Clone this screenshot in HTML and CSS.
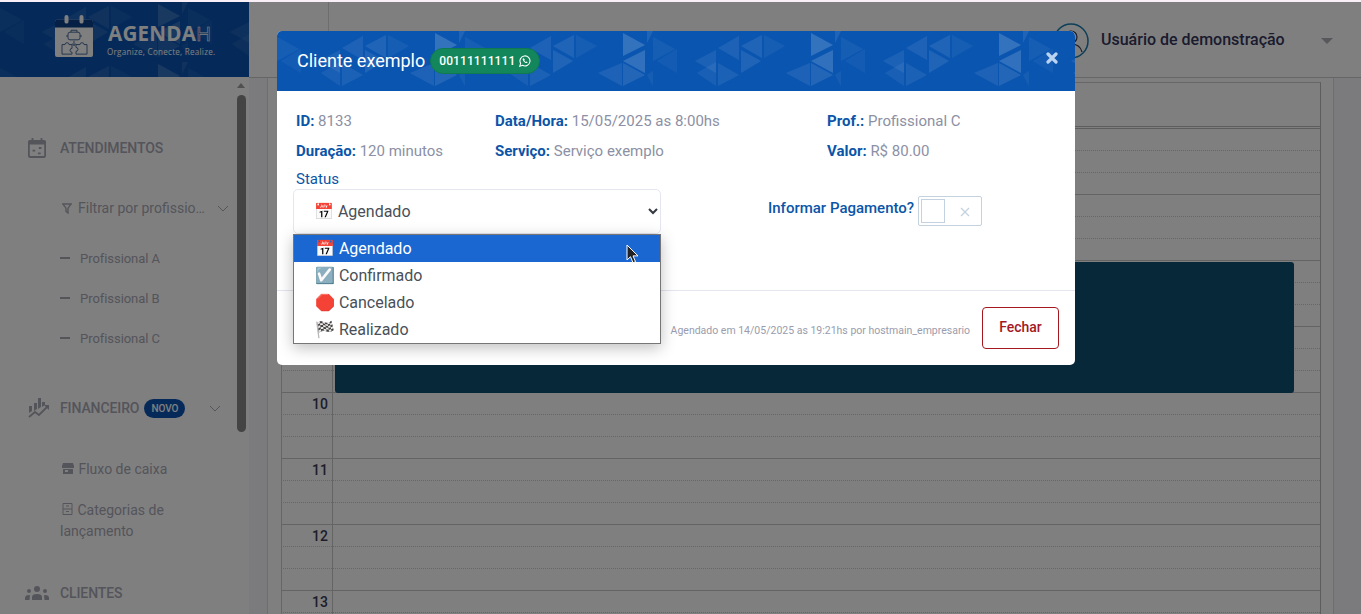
FILE: index.html
```html
<!DOCTYPE html>
<html lang="pt-BR">
<head>
  <meta charset="UTF-8">
  <meta name="viewport" content="width=device-width, initial-scale=1.0">
  <title>Agendah</title>
  <link rel="stylesheet" href="styles.css">
</head>
<body>
  <div id="page">
    <div id="sidebar">
      <div id="brand">
        <svg class="tri-bg" width="249" height="75"><defs>
          <pattern id="tri" width="188" height="60" patternUnits="userSpaceOnUse">
            <polygon points="158,2 180,14 158,25" fill="#fff" opacity=".17"/>
            <polygon points="158,30 180,19 180,42" fill="#fff" opacity=".16"/>
            <polygon points="182,12 182,0 188,0" fill="#fff" opacity=".09"/>
            <polygon points="109,4 109,27 88,15" fill="#fff" opacity=".09"/>
            <polygon points="111,4 111,27 132,15" fill="#fff" opacity=".05"/>
            <polygon points="88,19 88,42 108,30" fill="#fff" opacity=".09"/>
            <polygon points="63,19 63,42 42,30" fill="#fff" opacity=".07"/>
            <polygon points="133,42 157,32 157,55" fill="#fff" opacity=".08"/>
            <polygon points="158,32 180,44 158,55" fill="#fff" opacity=".1"/>
            <polygon points="182,44 188,40 188,55" fill="#fff" opacity=".05"/>
            <polygon points="65,17 86,5 86,29" fill="#fff" opacity=".08"/>
            <polygon points="44,42 63,31 63,55" fill="#fff" opacity=".06"/>
            <polygon points="65,32 86,44 65,55" fill="#fff" opacity=".07"/>
            <polygon points="0,6 22,18 0,30" fill="#fff" opacity=".05"/>
            <polygon points="24,18 24,42 4,30" fill="#fff" opacity=".04"/>
          </pattern></defs>
          <rect width="249" height="75" fill="url(#tri)"/>
        </svg>
        <svg class="logo" width="38" height="42" viewBox="0 0 38 44" preserveAspectRatio="none">
          <rect x="0" y="5" width="38" height="39" rx="2" fill="#fff"/>
          <path d="M0 13V7a2 2 0 0 1 2-2h34a2 2 0 0 1 2 2v6z" fill="#0d3f88"/>
          <rect x="9.500" y="0" width="4" height="9" rx="2" fill="#fff"/>
          <rect x="24.500" y="0" width="4" height="9" rx="2" fill="#fff"/>
          <g fill="none" stroke="#4a6a9a" stroke-width="1">
            <rect x="13" y="18" width="12" height="8" rx="2"/>
            <path d="M16 18v-2h6v2M13 22h-2M25 22h2M19 27v5M17 30l2 2 2-2"/>
            <path d="M7 31h3a2 2 0 0 1 4 0h3v4a2 2 0 0 0 0 4v2H7z"/>
            <path d="M21 31h4a2 2 0 0 1 4 0h3v10H21v-3a2 2 0 0 0 0-4z"/>
          </g>
        </svg>
        <div class="brand-text">
          <div class="brand-name">AGENDA<span class="brand-h">H</span></div>
          <div class="brand-tag">Organize, Conecte, Realize.</div>
        </div>
      </div>
      <div id="nav">
        <div class="nav-head nav-first">
          <svg class="nav-icon" width="18" height="20" viewBox="0 0 20 22"><path fill="currentColor" d="M4 0h2v2h8V0h2v2h2a2 2 0 0 1 2 2v16a2 2 0 0 1-2 2H2a2 2 0 0 1-2-2V4a2 2 0 0 1 2-2h2zM2 7v13h16V7zM5 13h3v2H5zm7-3h3v2h-3zm-1 6h3v2h-3z"/></svg>
          <span>ATENDIMENTOS</span>
        </div>
        <div class="nav-filter">
          <svg width="10" height="11" viewBox="0 0 10 11"><path fill="none" stroke="currentColor" stroke-width="1.400" d="M.8 1h8.400L6 5.200V10L4 8.500V5.200z"/></svg>
          <span class="filter-text">Filtrar por profissio…</span>
          <svg class="chev" width="12" height="7" viewBox="0 0 12 7"><path fill="none" stroke="currentColor" d="M1 1l5 5 5-5"/></svg>
        </div>
        <div class="nav-sub sub-first"><i></i>Profissional A</div>
        <div class="nav-sub"><i></i>Profissional B</div>
        <div class="nav-sub"><i></i>Profissional C</div>
        <div class="nav-head nav-fin">
          <svg class="nav-icon" width="22" height="20" viewBox="0 0 22 20"><path fill="currentColor" d="M1 8h3v5l-3 2zM6 5h3v6l-3 2zM10 0h3v9l-3 2zM14 4h3v3l-3 2z"/><path fill="none" stroke="currentColor" stroke-width="1.800" d="M1 19l6-5 4 3 8-8"/><path fill="currentColor" d="M16 7h5v5z"/></svg>
          <span>FINANCEIRO</span>
          <span class="badge-new">NOVO</span>
          <svg class="chev chev-fin" width="12" height="7" viewBox="0 0 12 7"><path fill="none" stroke="currentColor" d="M1 1l5 5 5-5"/></svg>
        </div>
        <div class="nav-link link-first">
          <svg width="12" height="11" viewBox="0 0 12 11"><path fill="currentColor" d="M1 0h10l1 3v2H0V3zM1 6h10v5H1zm2 1v2h3V7z"/></svg>
          Fluxo de caixa
        </div>
        <div class="nav-link link-wrap">
          <svg width="11" height="12" viewBox="0 0 11 12"><path fill="none" stroke="currentColor" d="M1 .5h9v11H1zM1 6h9"/><path fill="currentColor" d="M4 2.500h3v1H4zm0 5.500h3v1H4z"/></svg>
          Categorias de lançamento
        </div>
        <div class="nav-head nav-cli">
          <svg class="nav-icon nav-icon-wide" width="24" height="14" viewBox="0 0 24 14"><path fill="currentColor" d="M12 0a3 3 0 1 1 0 6 3 3 0 0 1 0-6zM4 3a2 2 0 1 1 0 4 2 2 0 0 1 0-4zm16 0a2 2 0 1 1 0 4 2 2 0 0 1 0-4zM7 14v-3q0-3 5-3t5 3v3zM0 14v-2q0-3 4-3l1 .3L4.500 14zm24 0v-2q0-3-4-3l-1 .3.5 4.700z"/></svg>
          <span>CLIENTES</span>
        </div>
      </div>
      <div class="scrollbar">
        <div class="scroll-up"></div>
        <div class="scroll-thumb"></div>
      </div>
    </div>
    <div id="main">
      <div id="topbar">
        <div class="top-divider"></div>
        <div class="user">
          <svg class="user-icon" width="36" height="36" viewBox="0 0 36 36"><circle cx="18" cy="18" r="17" fill="none" stroke="#1a7fb0" stroke-width="1.500"/><circle cx="18" cy="14" r="6" fill="none" stroke="#3a3a4c" stroke-width="1.200"/><path d="M7 29q2-8 11-8t11 8" fill="none" stroke="#3a3a4c" stroke-width="1.200"/></svg>
          <span class="user-name">Usuário de demonstração</span>
          <span class="user-caret"></span>
        </div>
      </div>
      <div id="content">
        <div class="content-inner">
          <div class="calendar">
            <div class="cal-head"></div>
            <div class="hour"><div class="hour-no"></div><div class="slots"><div></div><div></div><div></div></div></div>
            <div class="hour"><div class="hour-no"></div><div class="slots"><div></div><div></div><div></div></div></div>
            <div class="hour"><div class="hour-no"></div><div class="slots"><div></div><div></div><div></div></div></div>
            <div class="hour"><div class="hour-no"></div><div class="slots"><div></div><div></div><div></div></div></div>
            <div class="hour"><div class="hour-no">10</div><div class="slots"><div></div><div></div><div></div></div></div>
            <div class="hour"><div class="hour-no">11</div><div class="slots"><div></div><div></div><div></div></div></div>
            <div class="hour"><div class="hour-no">12</div><div class="slots"><div></div><div></div><div></div></div></div>
            <div class="hour"><div class="hour-no">13</div><div class="slots"><div></div><div></div><div></div></div></div>
            <div class="event"></div>
          </div>
        </div>
      </div>
    </div>
    <div id="overlay">
      <div id="modal">
        <div class="modal-head">
          <svg class="tri-bg" width="798" height="60"><rect width="798" height="60" fill="url(#tri)"/></svg>
          <span class="modal-title">Cliente exemplo</span>
          <span class="phone">00111111111
            <svg width="12" height="12" viewBox="0 0 12 12"><path fill="none" stroke="#fff" stroke-width="1.100" d="M.8 11.200l.8-2.900A5 5 0 1 1 3.600 10.300z"/><path fill="#fff" d="M4.200 3.200c-.6.500-.7 1.300-.2 2.300.6 1.200 1.500 2 2.700 2.500.9.300 1.600 0 2-.7l-1.300-.9-.6.500c-.7-.3-1.200-.8-1.500-1.500l.5-.6-.8-1.400z"/></svg>
          </span>
          <svg class="modal-close" width="12" height="12" viewBox="0 0 12 12"><path stroke="#b9d3f0" stroke-width="3.200" stroke-linecap="round" d="M2 2l8 8M10 2l-8 8"/></svg>
        </div>
        <div class="modal-body">
          <div class="info-grid">
            <div><b>ID:</b> 8133</div>
            <div><b>Data/Hora:</b> 15/05/2025 as 8:00hs</div>
            <div><b>Prof.:</b> Profissional C</div>
            <div><b>Duração:</b> 120 minutos</div>
            <div><b>Serviço:</b> Serviço exemplo</div>
            <div><b>Valor:</b> R$ 80.00</div>
          </div>
          <div class="status-label">Status</div>
          <div class="status-row">
            <div class="select-box">
              <span class="select-value"><span class="emoji">📅</span> Agendado</span>
              <svg width="10" height="7" viewBox="0 0 10 7"><path fill="none" stroke="#343a40" stroke-width="2" d="M1 1l4 4 4-4"/></svg>
            </div>
            <div class="pay">
              <span class="pay-label">Informar Pagamento?</span>
              <div class="toggle">
                <div class="toggle-knob"></div>
                <svg width="10" height="10" viewBox="0 0 10 10"><path stroke="#c3d2de" stroke-width="1.300" d="M1 1l8 8M9 1l-8 8"/></svg>
              </div>
            </div>
          </div>
        </div>
        <div class="modal-foot">
          <span class="foot-note">Agendado em 14/05/2025 as 19:21hs por hostmain_empresario</span>
          <button class="btn-close">Fechar</button>
        </div>
        <div class="select-list">
          <div class="option option-on"><span class="emoji">📅</span> Agendado</div>
          <div class="option"><span class="emoji">☑️</span> Confirmado</div>
          <div class="option"><span class="emoji">🛑</span> Cancelado</div>
          <div class="option"><span class="emoji">🏁</span> Realizado</div>
        </div>
        <svg class="cursor" width="14" height="20" viewBox="0 0 14 20"><path fill="#222" stroke="#fff" d="M1 1v15l3.500-3.300 2.500 6 2.500-1-2.500-5.800H12z"/></svg>
      </div>
    </div>
  </div>
</body>
</html>
```

FILE: styles.css
```css
*{
  margin: 0px;
  padding: 0px;
  box-sizing: border-box;
}
body{
  width: 1361px;
  height: 614px;
  overflow: hidden;
  background-color: #f8f0f6;
  font-family: Roboto, "Liberation Sans", sans-serif;
  padding-top: 2px;
}
#page{
  position: relative;
  height: 612px;
  display: flex;
  overflow: hidden;
  background-color: #fff;
}

/* sidebar */
#sidebar{
  position: relative;
  width: 249px;
  flex-shrink: 0;
  background-color: #fff;
  color: #a9a9b6;
}
#brand{
  position: relative;
  height: 75px;
  background-color: #0a55b4;
  display: flex;
  padding: 13px 0 0 55px;
  gap: 15px;
}
.tri-bg{
  position: absolute;
  left: 0;
  top: 0;
}
.logo{
  position: relative;
}
.brand-text{
  position: relative;
  color: #fff;
  font-family: "Open Sans", sans-serif;
  margin-top: 6px;
}
.brand-name{
  font-size: 20.600px;
  font-weight: 700;
  line-height: 25px;
  letter-spacing: .2px;
}
.brand-h{
  color: transparent;
  -webkit-text-stroke: .6px #fff;
  font-weight: 400;
}
.brand-tag{
  font-size: 8.100px;
  line-height: 11px;
  letter-spacing: .25px;
  margin-left: -1px;
}
#nav{
  width: 237px;
  padding-left: 60px;
  font-size: 14px;
}
.nav-head{
  position: relative;
  height: 20px;
  line-height: 20px;
  font-weight: 500;
  letter-spacing: -.1px;
}
.nav-icon{
  position: absolute;
  left: -32px;
  top: 0;
}
.nav-icon-wide{
  left: -35px;
  top: 3px;
}
.nav-first{
  margin-top: 61px;
}
.nav-filter{
  display: flex;
  align-items: center;
  height: 20px;
  margin-top: 40px;
  font-size: 14px;
  margin-left: 2px;
}
.filter-text{
  margin-left: 6px;
}
.chev{
  margin-left: 12px;
}
.nav-sub{
  display: flex;
  align-items: center;
  height: 20px;
  margin-top: 20px;
  font-size: 13px;
  letter-spacing: -.05px;
}
.nav-sub i{
  width: 10px;
  height: 2px;
  margin-right: 10px;
  background-color: currentColor;
}
.sub-first{
  margin-top: 30px;
}
.nav-fin{
  display: flex;
  align-items: center;
  margin-top: 60px;
  margin-top: 50px;
}
.nav-fin .nav-icon{
  top: 0;
  left: -32px;
}
.badge-new{
  margin-left: 5px;
  width: 41px;
  height: 19px;
  border-radius: 10px;
  background-color: #0a55b4;
  color: #fff;
  font-size: 10px;
  line-height: 19px;
  text-align: center;
}
.chev-fin{
  margin-left: 24px;
}
.nav-link{
  font-size: 14px;
  line-height: 21px;
}
.link-first{
  margin-top: 41px;
}
.link-first svg,.link-wrap svg{
  margin: 0 1px 0 2px;
}
.link-wrap{
  margin-top: 20px;
  width: 130px;
}
.nav-cli{
  margin-top: 41px;
}
.scrollbar{
  position: absolute;
  left: 237px;
  top: 75px;
  width: 10px;
}
.scroll-up{
  width: 0;
  height: 0;
  margin: 6px 0 0 0;
  border: 4.500px solid transparent;
  border-top: 0;
  border-bottom: 5px solid #a0a0a0;
}
.scroll-thumb{
  width: 9px;
  height: 337px;
  margin-top: 7px;
  border-radius: 5px;
  background-color: #888;
}

/* top bar + calendar */
#main{
  flex: 1;
  display: flex;
  flex-direction: column;
  background-color: #fff;
}
#topbar{
  height: 75px;
  display: flex;
  padding-left: 79px;
}
.top-divider{
  width: 1px;
  background-color: #ddd;
}
.user{
  display: flex;
  align-items: center;
  margin-left: 724px;
  padding-top: 2px;
}
.user-icon{
  margin-right: 12px;
}
.user-name{
  font-size: 16px;
  font-weight: 500;
  color: #36365c;
  margin-top: -2px;
}
.user-caret{
  margin-left: 36px;
  border: 6px solid transparent;
  border-top: 6px solid #b0b0b8;
  border-bottom: 0;
}
#content{
  flex: 1;
  background-color: #f6f7fa;
  border-top: 1px solid #ccc;
  padding-left: 18px;
  overflow: hidden;
}
.content-inner{
  width: 1067px;
  height: 100%;
  background-color: #fff;
  padding: 4px 14px 0 13px;
  border-left: 1px solid #ddd;
  border-right: 1px solid #ddd;
}
.calendar{
  position: relative;
  width: 1040px;
  border: 1px solid #ccc;
  border-right: 1px solid #bbb;
}
.cal-head{
  height: 46px;
  border-bottom: 3px double #bbb;
}
.hour{
  display: flex;
  height: 66px;
  border-bottom: 1px solid #c8c8c8;
}
.hour-no{
  width: 51px;
  border-right: 1px solid #c8c8c8;
  padding: 1px 4px 0 0;
  text-align: right;
  font-size: 14px;
  line-height: 20px;
  font-weight: 500;
  color: #3a3a58;
}
.slots{
  flex: 1;
}
.slots div{
  height: 22px;
  margin-left: -52px;
  border-bottom: 1px dotted #ccc;
}
.slots div:last-child{
  border-bottom: 0;
}
.event{
  position: absolute;
  left: 53px;
  top: 179px;
  width: 959px;
  height: 131px;
  border-radius: 3px;
  background-color: #0c5070;
}

/* modal */
#overlay{
  position: absolute;
  left: 0;
  top: 0;
  width: 100%;
  height: 100%;
  background-color: rgba(0,0,0,.5);
  padding: 29px 0 0 277px;
}
#modal{
  position: relative;
  width: 798px;
  height: 334px;
  background-color: #fff;
  border-radius: 5px;
  overflow: hidden;
  display: flex;
  flex-direction: column;
}
.modal-head{
  position: relative;
  height: 60px;
  flex-shrink: 0;
  background-color: #0a55b0;
  display: flex;
  align-items: center;
  padding-left: 20px;
  color: #fff;
}
.modal-title{
  position: relative;
  font-size: 18px;
  line-height: 22px;
}
.phone{
  position: relative;
  display: flex;
  align-items: center;
  gap: 4px;
  margin-left: 5px;
  height: 26px;
  padding: 0 8px 0 8px;
  border-radius: 13px;
  background-color: #13875b;
  border: 1px solid #0f7a52;
  font-size: 12px;
  font-weight: 500;
  letter-spacing: .1px;
}
.modal-close{
  position: absolute;
  right: 17px;
  top: 21px;
}
.modal-body{
  height: 199px;
  flex-shrink: 0;
  padding: 20px 20px 0 16px;
}
.info-grid{
  display: grid;
  grid-template-columns: 199px 332px 1fr;
  grid-auto-rows: 30px;
  padding-left: 3px;
  font-size: 15px;
  line-height: 20px;
  color: #8c90a4;
}
.info-grid b{
  color: #0b55a8;
  font-weight: 700;
}
.status-label{
  padding-left: 3px;
  margin-top: -2px;
  font-size: 15px;
  line-height: 20px;
  color: #0b55a8;
}
.status-row{
  display: flex;
}
.select-box{
  width: 368px;
  height: 45px;
  border: 1px solid #e3e6ef;
  border-radius: 5px;
  display: flex;
  align-items: center;
  justify-content: space-between;
  padding: 0 2px 0 20px;
  font-size: 16px;
  color: #495057;
}
.pay{
  display: flex;
  margin: 7px 0 0 107px;
}
.pay-label{
  margin-right: 4px;
  font-size: 15px;
  line-height: 24px;
  font-weight: 500;
  color: #0b55a8;
  white-space: nowrap;
}
.toggle{
  width: 64px;
  height: 30px;
  border: 1px solid #c3d2de;
  border-radius: 2px;
  padding: 2px 0 0 2px;
  display: flex;
  align-items: flex-start;
  gap: 15px;
}
.toggle svg{
  margin-top: 8px;
}
.toggle-knob{
  width: 24px;
  height: 24px;
  border: 1px solid #c3d2de;
}
.modal-foot{
  flex: 1;
  display: flex;
  align-items: center;
  justify-content: flex-end;
  padding-right: 16px;
  border-top: 1px solid #e3e6ef;
}
.foot-note{
  margin: 4px 12px 0 0;
  font-size: 10.500px;
  color: #9a9cad;
}
.btn-close{
  width: 77px;
  height: 42px;
  padding-bottom: 2px;
  border: 1px solid #a5181f;
  border-radius: 4px;
  background-color: #fff;
  color: #a5181f;
  font-family: inherit;
  font-size: 14px;
  font-weight: 500;
}
.select-list{
  position: absolute;
  left: 16px;
  top: 203px;
  width: 368px;
  height: 110px;
  border: 1px solid #767676;
  background-color: #fff;
  box-shadow: 0 4px 14px rgba(0,0,0,.25);
  font-size: 16px;
  color: #495057;
}
.option{
  height: 27px;
  line-height: 27px;
  padding-left: 21px;
}
.option-on{
  background-color: #1a67d2;
  color: #fff;
}
.emoji{
  font-family: "Noto Color Emoji", sans-serif;
}
.cursor{
  position: absolute;
  left: 349px;
  top: 213px;
}
```
